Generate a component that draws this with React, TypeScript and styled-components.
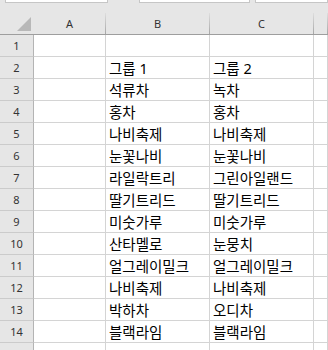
import React from "react";
import styled, { createGlobalStyle } from "styled-components";

const GlobalStyle = createGlobalStyle`
  html, body {
    margin: 0;
    padding: 0;
    background: #ffffff;
    overflow: hidden;
  }
`;

const columns = ["A", "B", "C"];

const rows: [string, string][] = [
  ["", ""],
  ["그룹 1", "그룹 2"],
  ["석류차", "녹차"],
  ["홍차", "홍차"],
  ["나비축제", "나비축제"],
  ["눈꽃나비", "눈꽃나비"],
  ["라일락트리", "그린아일랜드"],
  ["딸기트리드", "딸기트리드"],
  ["미숫가루", "미숫가루"],
  ["산타멜로", "눈뭉치"],
  ["얼그레이밀크", "얼그레이밀크"],
  ["나비축제", "나비축제"],
  ["박하차", "오디차"],
  ["블랙라임", "블랙라임"],
];

export default function App() {
  return (
    <Sheet>
      <GlobalStyle />
      <TopStrip>
        <BarBox $left={5} $width={101} />
        <BarBox $left={31} $width={109} />
        <BarBox $left={5} $grow />
      </TopStrip>

      <Grid>
        <HeaderRow>
          <Corner>
            <svg width="15" height="15" viewBox="0 0 15 15">
              <polygon points="14,0 14,14 0,14" fill="#b8b8b8" />
            </svg>
          </Corner>
          {columns.map((c) => (
            <ColHeader key={c}>{c}</ColHeader>
          ))}
          <ColHeader />
        </HeaderRow>

        {rows.map((r, i) => (
          <Row key={i}>
            <RowHeader>{i + 1}</RowHeader>
            <Cell />
            <Cell>{r[0]}</Cell>
            <Cell>{r[1]}</Cell>
            <Cell />
          </Row>
        ))}
        <Row>
          <RowHeader />
          <Cell />
          <Cell />
          <Cell />
          <Cell />
        </Row>
      </Grid>
    </Sheet>
  );
}

// 스타일
const Sheet = styled.div`
  width: 328px;
  height: 350px;
  overflow: hidden;
  background: #ffffff;
`;

const TopStrip = styled.div`
  display: flex;
  height: 13px;
  background: #e6e6e6;
  align-items: flex-start;
`;

const BarBox = styled.div<{ $left: number; $width?: number; $grow?: boolean }>`
  margin-left: ${(p) => p.$left}px;
  width: ${(p) => (p.$width ? `${p.$width}px` : "auto")};
  flex: ${(p) => (p.$grow ? 1 : "none")};
  height: 2px;
  background: #ffffff;
  border: 1px solid #c6c6c6;
  border-top: none;
`;

const Grid = styled.div`
  display: flex;
  flex-direction: column;
`;

const colTemplate = "34px 72px 104px 104px 1fr";

const HeaderRow = styled.div`
  display: grid;
  grid-template-columns: ${colTemplate};
  height: 21px;
  background: #e6e6e6;
  border-bottom: 1px solid #9e9e9e;
`;

const Corner = styled.div`
  display: flex;
  justify-content: flex-end;
  align-items: flex-end;
  padding: 0 1px 2px 0;
  border-right: 1px solid #e6e6e6;
`;

const ColHeader = styled.div`
  display: flex;
  align-items: center;
  justify-content: center;
  font-family: "Noto Sans", "Liberation Sans", sans-serif;
  font-size: 11px;
  color: #333333;
  border-right: 1px solid;
  border-image: linear-gradient(to bottom, #e0e0e0, #a4a4a4) 1;
`;

const Row = styled.div`
  display: grid;
  grid-template-columns: ${colTemplate};
  height: 22px;
`;

const RowHeader = styled.div`
  display: flex;
  align-items: center;
  justify-content: center;
  background: #e6e6e6;
  border-right: 1px solid #b4b4b4;
  border-bottom: 1px solid #cbcbcb;
  font-family: "Noto Sans", "Liberation Sans", sans-serif;
  font-size: 11px;
  color: #333333;
`;

const Cell = styled.div`
  display: flex;
  align-items: center;
  padding-left: 3px;
  border-right: 1px solid #d4d4d4;
  border-bottom: 1px solid #d4d4d4;
  font-family: "Noto Sans", "Noto Sans CJK KR", sans-serif;
  font-size: 14.5px;
  color: #000000;
  white-space: nowrap;
  overflow: hidden;
`;
